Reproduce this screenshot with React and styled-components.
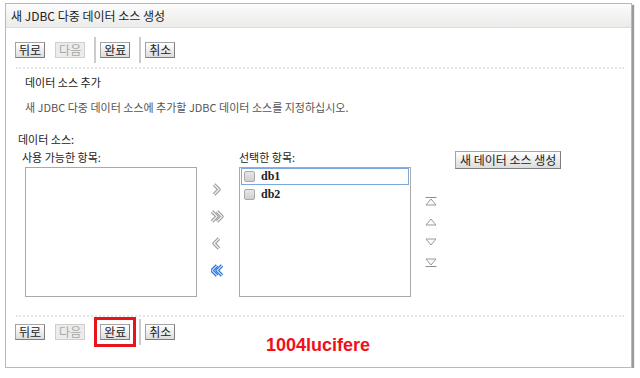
import styled, { createGlobalStyle } from 'styled-components';

const Global = createGlobalStyle`
  body {
    margin: 0;
    background: #fff;
    font-family: "Noto Sans CJK KR", "Noto Sans", sans-serif;
  }
`;

const Page = styled.div`
  padding: 3px 0 0 5px;
  position: relative;
`;

const Panel = styled.div`
  width: 625px;
  height: 363px;
  border: 1px solid #b9b9b9;
  box-shadow: 2px 2px 1px #9a9a9a;
  background: #fff;
  display: flex;
  flex-direction: column;
`;

const Header = styled.div`
  height: 23px;
  line-height: 23px;
  padding-left: 5px;
  font-size: 12px;
  color: #222;
  background: linear-gradient(#fbfbfb, #ebebea);
  border-bottom: 1px solid #dcdcdc;
`;

const Toolbar = styled.div`
  display: flex;
  align-items: center;
  gap: 10px;
  height: ${(p) => p.$height}px;
  margin: ${(p) => p.$top}px 0 0 9px;
`;

const Sep = styled.div`
  width: 2px;
  height: 26px;
  background: #cbcbcb;
  margin: 0 -6px 0 ${(p) => p.$left ?? -1}px;
`;

const Button = styled.button`
  height: 16px;
  padding: 0 3px;
  font-family: "Noto Sans CJK KR", sans-serif;
  font-size: 12px;
  line-height: 14px;
  color: ${(p) => (p.disabled ? '#a8a8a8' : '#222')};
  border: 1px solid ${(p) => (p.disabled ? '#cfcfcf' : '#a4a4a4')};
  border-right-color: ${(p) => (p.disabled ? '#cfcfcf' : '#7d7d7d')};
  border-bottom-color: ${(p) => (p.disabled ? '#cfcfcf' : '#7d7d7d')};
  background: ${(p) => (p.disabled ? '#ececec' : 'linear-gradient(#ffffff, #dcdcdc)')};
  border-radius: 0;
  cursor: default;
`;

const Highlight = styled.div`
  border: 3px solid #e8141b;
  padding: 4px 3px;
  margin-left: -1px;
  display: flex;
`;

const Divider = styled.div`
  margin: ${(p) => p.$top}px 7px 0 10px;
  border-top: 2px dotted #e6e6e6;
`;

const Section = styled.div`
  padding-left: 19px;
  margin-top: 6px;
  font-size: 11px;
  line-height: 14px;
  color: #222;
`;

const Desc = styled.div`
  padding-left: 19px;
  margin-top: 11px;
  font-size: 11px;
  line-height: 14px;
  color: #555;
`;

const GroupTitle = styled.div`
  padding-left: 12px;
  margin-top: 18px;
  font-size: 11px;
  line-height: 14px;
  color: #222;
`;

const Columns = styled.div`
  display: flex;
  align-items: flex-start;
  margin-top: 4px;
  padding-left: 16px;
`;

const Column = styled.div`
  display: flex;
  flex-direction: column;
`;

const Label = styled.div`
  font-size: 11px;
  line-height: 14px;
  height: 14px;
  color: #222;
  padding-left: ${(p) => p.$indent || 0}px;
  margin-bottom: 3px;
`;

const ListBox = styled.div`
  width: 170px;
  height: 128px;
  border: 1px solid #a9a9a9;
  margin-left: ${(p) => p.$left || 0}px;
  background: #fff;
`;

const Row = styled.div`
  display: flex;
  align-items: center;
  gap: 6px;
  height: 15px;
  padding-left: 2px;
  margin: 0 1px 1px 1px;
  border: 1px solid ${(p) => (p.$focus ? '#7ea7e0' : 'transparent')};
  font-family: "Liberation Serif", serif;
  font-weight: bold;
  font-size: 12px;
  color: #222;
`;

const Check = styled.span`
  width: 9px;
  height: 9px;
  border: 1px solid #a8a8a8;
  border-radius: 2px;
  background: linear-gradient(#e8e8e8, #cfcfcf);
`;

const Movers = styled.div`
  display: flex;
  flex-direction: column;
  align-items: center;
  gap: 14px;
  width: 42px;
  padding-top: 33px;
`;

const Orders = styled.div`
  display: flex;
  flex-direction: column;
  align-items: center;
  gap: 8px;
  width: 40px;
  padding-top: 46px;
`;

const NewWrap = styled.div`
  margin-top: -4px;
  margin-left: 4px;

  button {
    height: 18px;
    padding: 0 4px;
  }
`;

const Watermark = styled.div`
  position: absolute;
  left: 266px;
  top: 335px;
  font-family: "Liberation Sans", "Noto Sans", sans-serif;
  font-weight: bold;
  font-size: 18px;
  color: #f0101a;
`;

function Chevron({ double, left, blue }) {
  const stroke = blue ? '#1f6fd6' : '#9a9a9a';
  const fill = blue ? '#bcd7f7' : '#f2f2f2';
  const one = (x) => (left ? `M${x + 5} 1 L${x} 6 L${x + 5} 11` : `M${x} 1 L${x + 5} 6 L${x} 11`);
  const xs = double ? [1, 6] : [3];
  return (
    <svg width="14" height="13" viewBox="0 0 14 12">
      {xs.map((x) => (
        <g key={x}>
          <path d={one(x)} fill="none" stroke={stroke} strokeWidth="3.4" strokeLinejoin="round" />
          <path d={one(x)} fill="none" stroke={fill} strokeWidth="1.3" strokeLinejoin="round" />
        </g>
      ))}
    </svg>
  );
}

function Tri({ up, bar }) {
  const tri = up ? 'M1 9 L6 3 L11 9 Z' : 'M1 3 L6 9 L11 3 Z';
  return (
    <svg width="12" height="12" viewBox="0 0 12 12">
      <path d={tri} fill="#fafafa" stroke="#9b9b9b" strokeWidth="1" />
      {bar && <line x1="0.5" x2="11.5" y1={up ? 1.5 : 10.5} y2={up ? 1.5 : 10.5} stroke="#8d8d8d" strokeWidth="1" />}
    </svg>
  );
}

function Buttons({ top, highlight }) {
  return (
    <Toolbar $top={top} $height={highlight ? 30 : 26}>
      <Button>뒤로</Button>
      <Button disabled>다음</Button>
      {highlight ? (
        <Highlight>
          <Button>완료</Button>
        </Highlight>
      ) : (
        <>
          <Sep />
          <Button>완료</Button>
        </>
      )}
      <Sep $left={highlight ? -7 : -1} />
      <Button>취소</Button>
    </Toolbar>
  );
}

export default function App() {
  return (
    <>
      <Global />
      <Page>
        <Panel>
          <Header>새 JDBC 다중 데이터 소스 생성</Header>
          <Buttons top={9} />
          <Divider $top={4} />
          <Section>데이터 소스 추가</Section>
          <Desc>새 JDBC 다중 데이터 소스에 추가할 JDBC 데이터 소스를 지정하십시오.</Desc>
          <GroupTitle>데이터 소스:</GroupTitle>
          <Columns>
            <Column>
              <Label $indent={0}>사용 가능한 항목:</Label>
              <ListBox $left={3} />
            </Column>
            <Movers>
              <Chevron />
              <Chevron double />
              <Chevron left />
              <Chevron left double blue />
            </Movers>
            <Column>
              <Label $indent={-3}>선택한 항목:</Label>
              <ListBox>
                <Row $focus>
                  <Check />
                  db1
                </Row>
                <Row>
                  <Check />
                  db2
                </Row>
              </ListBox>
            </Column>
            <Orders>
              <Tri up bar />
              <Tri up />
              <Tri />
              <Tri bar />
            </Orders>
            <NewWrap>
              <Button>새 데이터 소스 생성</Button>
            </NewWrap>
          </Columns>
          <Divider $top={18} />
          <Buttons top={0} highlight />
        </Panel>
        <Watermark>1004lucifere</Watermark>
      </Page>
    </>
  );
}
